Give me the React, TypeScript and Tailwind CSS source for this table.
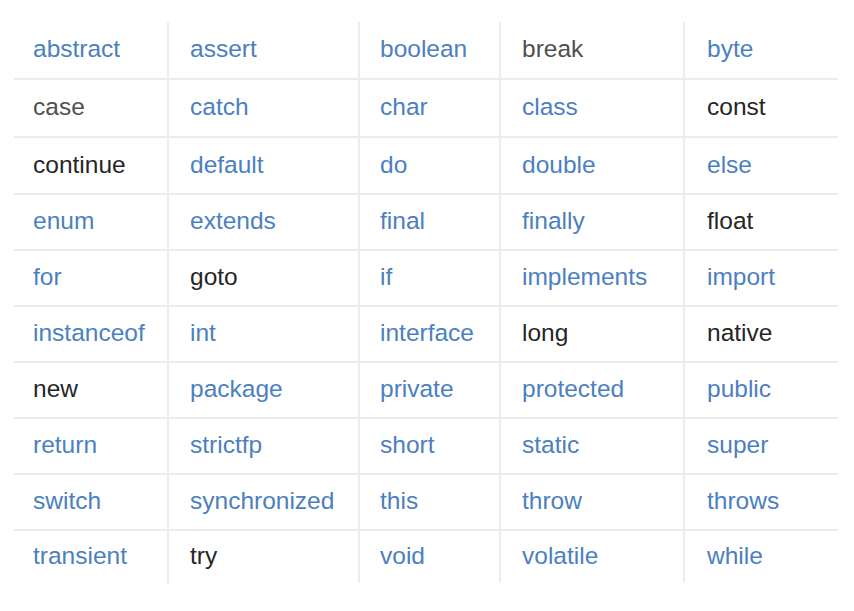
import React from "react";

type Cell = { t: string; c: "b" | "g" | "k" };

const rows: Cell[][] = [
  [{ t: "abstract", c: "b" }, { t: "assert", c: "b" }, { t: "boolean", c: "b" }, { t: "break", c: "g" }, { t: "byte", c: "b" }],
  [{ t: "case", c: "g" }, { t: "catch", c: "b" }, { t: "char", c: "b" }, { t: "class", c: "b" }, { t: "const", c: "k" }],
  [{ t: "continue", c: "k" }, { t: "default", c: "b" }, { t: "do", c: "b" }, { t: "double", c: "b" }, { t: "else", c: "b" }],
  [{ t: "enum", c: "b" }, { t: "extends", c: "b" }, { t: "final", c: "b" }, { t: "finally", c: "b" }, { t: "float", c: "k" }],
  [{ t: "for", c: "b" }, { t: "goto", c: "k" }, { t: "if", c: "b" }, { t: "implements", c: "b" }, { t: "import", c: "b" }],
  [{ t: "instanceof", c: "b" }, { t: "int", c: "b" }, { t: "interface", c: "b" }, { t: "long", c: "k" }, { t: "native", c: "k" }],
  [{ t: "new", c: "k" }, { t: "package", c: "b" }, { t: "private", c: "b" }, { t: "protected", c: "b" }, { t: "public", c: "b" }],
  [{ t: "return", c: "b" }, { t: "strictfp", c: "b" }, { t: "short", c: "b" }, { t: "static", c: "b" }, { t: "super", c: "b" }],
  [{ t: "switch", c: "b" }, { t: "synchronized", c: "b" }, { t: "this", c: "b" }, { t: "throw", c: "b" }, { t: "throws", c: "b" }],
  [{ t: "transient", c: "b" }, { t: "try", c: "k" }, { t: "void", c: "b" }, { t: "volatile", c: "b" }, { t: "while", c: "b" }],
];

const rowH = ["h-[58px]", "h-[58px]", "h-[57px]", "h-[56px]", "h-[56px]", "h-[56px]", "h-[56px]", "h-[56px]", "h-[56px]", "h-[52px]"];
const colW = ["w-[153px] pl-[19px]", "w-[191px] pl-[21px] border-l-2", "w-[141px] pl-[20px] border-l-2", "w-[184px] pl-[21px] border-l-2", "w-[155px] pl-[22px] border-l-2"];
const color = { b: "text-[#4c80c0]", g: "text-[#505050]", k: "text-[#262626]" };

export default function App() {
  return (
    <div className="w-[854px] h-[611px] bg-white pt-[22px] pl-[14px]" style={{ fontFamily: '"Liberation Sans", Arial, sans-serif' }}>
      <div className="flex flex-col w-[824px]">
        {rows.map((r, i) => (
          <div key={i} className={`flex ${rowH[i]} ${i < rows.length - 1 ? "border-b-2 border-[#ececef]" : ""}`}>
            {r.map((c, j) => (
              <div key={j} className={`${colW[j]} border-[#ececef] flex items-center text-[24.5px] leading-none ${color[c.c]}`}>
                <span className="-mt-[1px]">{c.t}</span>
              </div>
            ))}
          </div>
        ))}
      </div>
    </div>
  );
}
